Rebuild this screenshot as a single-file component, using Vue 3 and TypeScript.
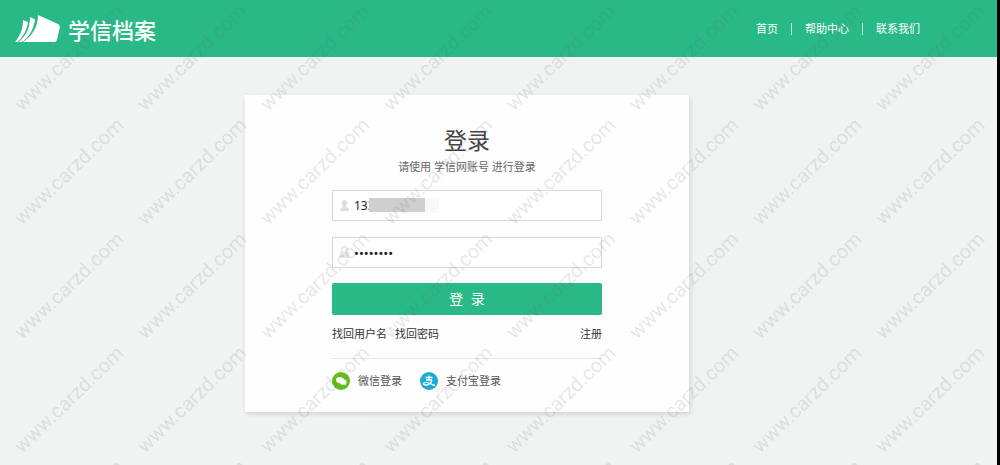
<script setup lang="ts">
import { ref } from 'vue'

interface Mark {
  x: number
  y: number
}

const navItems: string[] = ['首页', '帮助中心', '联系我们']
const account = ref<string>('133')
const password = ref<string>('12345678')

const STEP_X = 123
const STEP_Y = 114
const marks: Mark[] = []
for (let row = 0; row < 5; row++) {
  for (let col = 0; col < 8; col++) {
    marks.push({ x: 22 + col * STEP_X, y: 112 + row * STEP_Y })
  }
}
</script>

<template>
  <div class="page">
    <header class="header">
      <a class="brand" href="#">
        <svg class="brand-mark" viewBox="0 0 46 28" aria-hidden="true">
          <path d="M0 27C5 21 8 14 8 5L13 7C12 15 8 22 2.500 27Z" fill="#fff" />
          <path d="M3.500 27C11 21 15 13 15 2L20 4.500C19 14 14 22 7 27Z" fill="#fff" />
          <path d="M8 27C17 21 23 12 23 0L43 9C45 10 45 12 44.500 14L42 25C41 27 40 27 38 27Z" fill="#fff" />
        </svg>
        <span class="brand-name">学信档案</span>
      </a>
      <nav class="nav">
        <template v-for="(item, i) in navItems" :key="item">
          <span v-if="i > 0" class="nav-sep"></span>
          <a href="#">{{ item }}</a>
        </template>
      </nav>
    </header>

    <main class="main">
      <form class="card" @submit.prevent>
        <h1 class="title">登录</h1>
        <p class="subtitle">请使用 学信网账号 进行登录</p>

        <div class="field">
          <svg class="field-icon" viewBox="0 0 12 14" aria-hidden="true">
            <path d="M6 1C8 1 9 2 9 4C9 6 8 7 7.500 8C8 9 11 9 11 13H1C1 9 4 9 4.500 8C4 7 3 6 3 4C3 2 4 1 6 1Z" fill="#dedede" />
          </svg>
          <input v-model="account" type="text" aria-label="账号" autocomplete="off" />
          <span class="mask"></span>
        </div>
        <div class="field">
          <svg class="field-icon" viewBox="0 0 12 14" aria-hidden="true">
            <path d="M3 6V4C3 0 9 0 9 4V6" fill="none" stroke="#e6e6e6" stroke-width="2" />
            <rect x="1" y="6" width="10" height="7" rx="1" fill="#e6e6e6" />
          </svg>
          <input v-model="password" class="secret" type="password" aria-label="密码" autocomplete="off" />
        </div>

        <button class="submit" type="submit">登&nbsp;&nbsp;录</button>

        <div class="links">
          <a href="#">找回用户名</a>
          <a href="#">找回密码</a>
          <a class="register" href="#">注册</a>
        </div>

        <div class="social">
          <a href="#">
            <svg class="social-icon" viewBox="0 0 18 18" aria-hidden="true">
              <circle cx="9" cy="9" r="9" fill="#62bd18" />
              <ellipse cx="8" cy="8" rx="4" ry="3" fill="#fff" />
              <ellipse cx="11" cy="10" rx="3.600" ry="2.800" fill="#fff" />
              <path d="M12 12L14 13.500L13.500 11.500Z" fill="#fff" />
            </svg>
            <span>微信登录</span>
          </a>
          <a href="#">
            <svg class="social-icon" viewBox="0 0 18 18" aria-hidden="true">
              <circle cx="9" cy="9" r="9" fill="#1cabd4" />
              <g fill="none" stroke="#fff" stroke-width="1.300">
                <path d="M5.500 5.500H12.500M9 3.500V8M6 8H12" />
                <path d="M12 8C11 12 8 13 5.500 13C2.500 13 2.800 10.300 6 10.300C9 10.300 11 12.500 15 13.500" />
              </g>
            </svg>
            <span>支付宝登录</span>
          </a>
        </div>
      </form>
    </main>

    <svg class="marks" aria-hidden="true">
      <text
        v-for="(m, i) in marks"
        :key="i"
        :transform="`translate(${m.x} ${m.y}) rotate(-44)`"
      >www.carzd.com</text>
    </svg>
  </div>
</template>

<style>
body {
  margin: 0;
}
</style>

<style scoped>
.page {
  position: relative;
  display: flex;
  flex-direction: column;
  box-sizing: border-box;
  min-height: 100vh;
  border-right: 3px solid #000;
  background: linear-gradient(90deg, #eff4f3, #f1f3f2 50%);
  font-family: "Noto Sans", "Noto Sans CJK SC", sans-serif;
  font-size: 11px;
  line-height: 20px;
  color: #333;
}

a {
  color: inherit;
  text-decoration: none;
}

.header {
  display: flex;
  align-items: center;
  justify-content: space-between;
  box-sizing: border-box;
  height: 57px;
  padding: 0 77px 0 15px;
  background: #28b987;
  color: #fff;
}

.brand {
  display: flex;
  align-items: center;
  gap: 7px;
}

.brand-mark {
  width: 46px;
  height: 28px;
}

.brand-name {
  padding-top: 2px;
  font-size: 22px;
  font-weight: 500;
  line-height: 28px;
}

.nav {
  display: flex;
  align-items: center;
  gap: 13px;
}

.nav-sep {
  width: 1px;
  height: 12px;
  background: #c4ecdd;
}

.main {
  flex: 1;
  padding: 38px 24px 53px 245px;
}

.card {
  box-sizing: border-box;
  max-width: 444px;
  padding: 29px 87px 21px;
  background: #fefefe;
  box-shadow: 1px 2px 5px rgba(0, 0, 0, 0.14);
}

.title {
  margin: 0;
  font-size: 23px;
  font-weight: 400;
  line-height: 32px;
  text-align: center;
  color: #444;
}

.subtitle {
  margin: 1px 0 13px;
  text-align: center;
  color: #666;
}

.field {
  position: relative;
  display: flex;
  align-items: center;
  gap: 4px;
  box-sizing: border-box;
  height: 31px;
  margin-bottom: 16px;
  padding: 0 6px;
  border: 1px solid #d5dad8;
  background: #fff;
}

.field-icon {
  flex: none;
  width: 11px;
  height: 13px;
}

.field input {
  flex: 1;
  min-width: 0;
  padding: 0;
  border: 0;
  outline: 0;
  background: transparent;
  font: inherit;
  font-size: 12px;
  color: #222;
}

.field .secret {
  font-size: 13px;
}

.mask {
  position: absolute;
  top: 7px;
  left: 36px;
  width: 56px;
  height: 14px;
  background: #cfcfcf;
  box-shadow: 14px 1px 0 #f8f8f8;
}

.submit {
  display: block;
  width: 100%;
  height: 32px;
  margin: 0;
  padding: 0;
  border: 0;
  border-radius: 2px;
  background: #28b987;
  font: inherit;
  font-size: 14px;
  color: #fff;
}

.field + .submit {
  margin-top: -1px;
}

.links {
  display: flex;
  gap: 8px;
  margin-top: 9px;
}

.register {
  margin-left: auto;
}

.social {
  display: flex;
  gap: 18px;
  margin-top: 14px;
  padding-top: 12px;
  border-top: 1px solid #e4e7e6;
  color: #555;
}

.social a {
  display: flex;
  align-items: center;
  gap: 8px;
}

.social-icon {
  width: 18px;
  height: 18px;
}

.marks {
  position: absolute;
  inset: 0;
  width: 100%;
  height: 100%;
  pointer-events: none;
  font-family: Roboto, sans-serif;
  font-size: 20px;
  fill: rgba(110, 110, 110, 0.17);
}
</style>
